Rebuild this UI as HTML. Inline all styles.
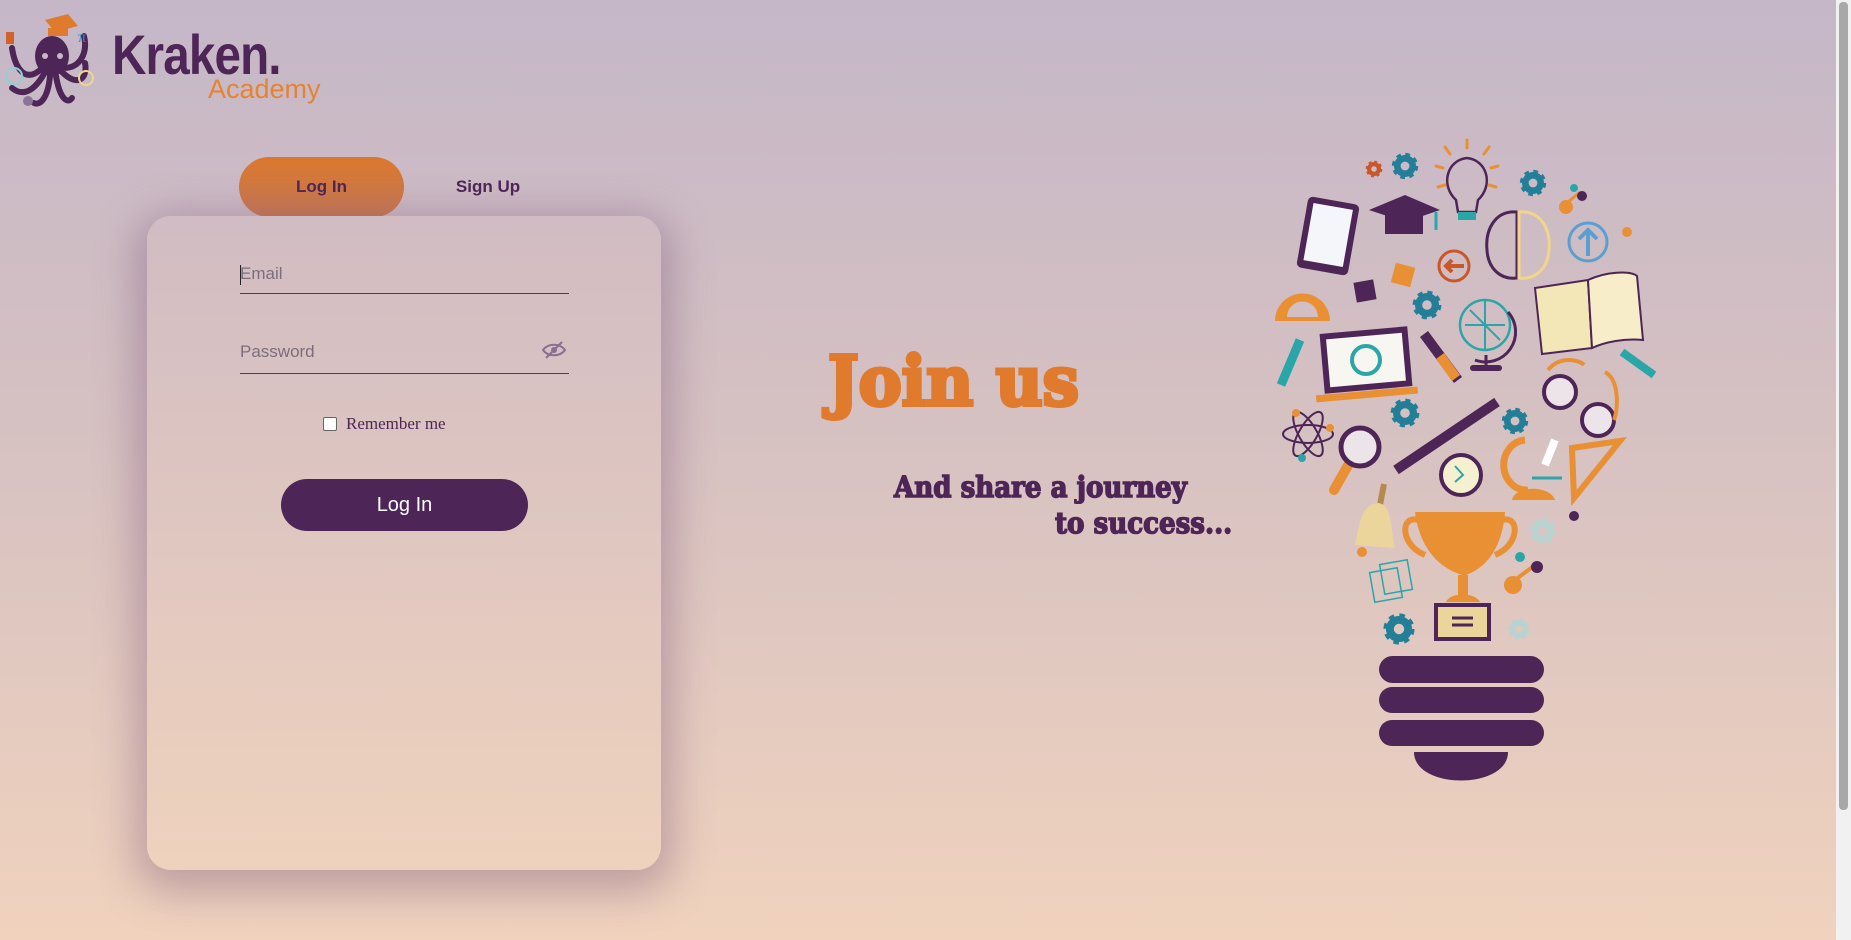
<!DOCTYPE html>
<html><head><meta charset="utf-8">
<style>
*{margin:0;padding:0;box-sizing:border-box}
html,body{width:1851px;height:940px;overflow:hidden}
body{background:linear-gradient(180deg,#c5b7c8 0%,#d6c1c2 45%,#f0d2bd 100%);font-family:"Liberation Sans",sans-serif;position:relative}
.abs{position:absolute}
.kr{left:112px;top:22px;font-size:56px;color:#4e2557;font-weight:bold;letter-spacing:-1px;transform:scaleX(.85);transform-origin:left}
.ac{left:208px;top:74px;font-size:27px;color:#e5832f}
.tab{left:239px;top:157px;width:165px;height:60px;border-radius:30px;background:linear-gradient(180deg,#db772d,#c87b55);color:#4e2557;font-weight:bold;font-size:17px;text-align:center;line-height:60px}
.su{left:440px;top:157px;width:96px;line-height:60px;text-align:center;font-weight:bold;font-size:17px;color:#4e2557}
.card{left:147px;top:216px;width:514px;height:654px;border-radius:24px;background:linear-gradient(180deg,#d1bcc3,#efd2bd);box-shadow:0 10px 40px 12px rgba(110,70,110,.35)}
.inp{left:240px;width:329px;border-bottom:1.5px solid #5a3361;color:#7b6e7c;font-size:17px}
.chk{left:323px;top:417px;width:14px;height:14px;border:1px solid #666;border-radius:2px;background:#fff}
.rem{left:346px;top:414px;font-family:"Liberation Serif",serif;font-size:17px;color:#4e2557}
.btn{left:281px;top:479px;width:247px;height:52px;border-radius:26px;background:#4e2557;color:#fff;font-size:20px;text-align:center;line-height:52px}
.join{left:828px;top:348px;font-family:"DejaVu Serif","Liberation Serif",serif;font-weight:900;font-size:68px;line-height:1;color:#e07a2c;letter-spacing:0px;transform:scaleX(.95);transform-origin:left;-webkit-text-stroke:4px #e07a2c}
.sh{font-family:"DejaVu Serif","Liberation Serif",serif;font-weight:bold;font-size:29px;color:#4e2557;transform:scaleX(.9);transform-origin:left;-webkit-text-stroke:1.5px #4e2557}
.sb{left:1836px;top:0;width:15px;height:940px;background:#f1f1f1}
.th{left:1839px;top:2px;width:9px;height:808px;background:#a8a8a8;border-radius:4px}
</style></head><body>
<svg class="abs" style="left:0;top:8px" width="100" height="105" viewBox="0 0 100 105">
<polygon points="45,12 68,6 78,18 55,24" fill="#e07a2c"/><rect x="48" y="20" width="20" height="8" fill="#e07a2c"/>
<ellipse cx="52" cy="48" rx="17" ry="20" fill="#4e2557"/>
<circle cx="45" cy="48" r="3" fill="#c9b8c6"/><circle cx="60" cy="48" r="3" fill="#c9b8c6"/>
<path d="M40,62 C25,75 15,60 12,40 M44,66 C30,90 18,85 12,80 M50,68 C48,90 40,98 34,95 M56,68 C60,92 68,96 72,90 M62,64 C78,80 88,70 85,55 M64,60 C80,60 88,45 84,28" stroke="#4e2557" stroke-width="6" fill="none" stroke-linecap="round"/>
<rect x="6" y="24" width="8" height="12" fill="#d0622a"/><text x="78" y="34" font-size="16" fill="#2a8fb0" font-family="Liberation Serif">π</text>
<circle cx="14" cy="68" r="8" fill="none" stroke="#8fd0d6" stroke-width="2"/><circle cx="86" cy="70" r="7" fill="none" stroke="#f0d58a" stroke-width="2"/>
<circle cx="28" cy="93" r="5" fill="#8b7497"/>
</svg>
<div class="abs kr">Kraken.</div>
<div class="abs ac">Academy</div>
<div class="abs tab">Log In</div>
<div class="abs su">Sign Up</div>
<div class="abs card"></div>
<div class="abs inp" style="top:264px;height:30px">Email</div>
<div class="abs" style="left:240px;top:265px;width:1px;height:20px;background:#222"></div>
<div class="abs inp" style="top:342px;height:32px">Password</div>
<svg class="abs" style="left:541px;top:340px" width="26" height="20" viewBox="0 0 26 20"><path d="M2,10 C7,3 19,3 24,10 C19,17 7,17 2,10Z" fill="none" stroke="#8b6e91" stroke-width="2"/><circle cx="13" cy="10" r="3" fill="#8b6e91"/><line x1="5" y1="18" x2="21" y2="2" stroke="#8b6e91" stroke-width="2"/></svg>
<div class="abs chk"></div>
<div class="abs rem">Remember me</div>
<div class="abs btn">Log In</div>
<div class="abs join">Join us</div>
<div class="abs sh" style="left:894px;top:470px">And share a journey</div>
<div class="abs sh" style="left:1055px;top:506px">to success...</div>
<svg class="abs" style="left:0;top:0" width="1851" height="940">
<defs>
<g id="gr"><circle r="7" fill="none" stroke="currentColor" stroke-width="6"/><circle r="10" fill="none" stroke="currentColor" stroke-width="4" stroke-dasharray="4 3.85"/></g>
</defs>
<g color="#c9572a"><use href="#gr" transform="translate(1374,169) scale(.7)"/></g>
<g color="#237e98">
<use href="#gr" transform="translate(1405,166) scale(1.1)"/>
<use href="#gr" transform="translate(1533,183) scale(1.1)"/>
<use href="#gr" transform="translate(1427,305) scale(1.2)"/>
<use href="#gr" transform="translate(1405,413) scale(1.2)"/>
<use href="#gr" transform="translate(1515,421) scale(1.1)"/>
<use href="#gr" transform="translate(1399,629) scale(1.3)"/>
</g>
<g color="#b9d3d0"><use href="#gr" transform="translate(1543,531) scale(1.1)"/><use href="#gr" transform="translate(1519,629) scale(.9)"/></g>
<path d="M1456,200 C1440,185 1447,160 1467,158 C1487,160 1494,185 1478,200 L1476,212 L1458,212Z" fill="none" stroke="#4e2557" stroke-width="2.5"/>
<rect x="1458" y="212" width="18" height="8" fill="#2aa6a9"/>
<g stroke="#e89033" stroke-width="3" stroke-linecap="round"><line x1="1467" y1="140" x2="1467" y2="148"/><line x1="1445" y1="147" x2="1450" y2="154"/><line x1="1489" y1="147" x2="1484" y2="154"/><line x1="1436" y1="166" x2="1443" y2="168"/><line x1="1498" y1="166" x2="1491" y2="168"/><line x1="1438" y1="187" x2="1445" y2="185"/><line x1="1496" y1="187" x2="1489" y2="185"/></g>
<line x1="1567" y1="203" x2="1580" y2="192" stroke="#e89033" stroke-width="3"/><circle cx="1566" cy="207" r="7" fill="#e89033"/><circle cx="1582" cy="196" r="5" fill="#4e2557"/><circle cx="1574" cy="188" r="4" fill="#2aa6a9"/>
<rect x="1302" y="200" width="52" height="72" rx="5" fill="#4e2557" transform="rotate(10 1328 236)"/>
<rect x="1308" y="206" width="40" height="58" fill="#f4f6fa" transform="rotate(10 1328 236)"/>
<polygon points="1369,210 1405,195 1440,210 1405,222" fill="#4e2557"/><rect x="1385" y="214" width="38" height="20" fill="#4e2557"/><line x1="1436" y1="212" x2="1436" y2="230" stroke="#2aa6a9" stroke-width="3"/>
<path d="M1517,212 C1495,210 1485,230 1487,250 C1488,268 1500,280 1517,278Z" fill="none" stroke="#4e2557" stroke-width="3"/>
<path d="M1519,212 C1541,210 1551,230 1549,250 C1548,268 1536,280 1519,278Z" fill="none" stroke="#f0d58a" stroke-width="3"/>
<circle cx="1588" cy="242" r="19" fill="none" stroke="#5a9fd0" stroke-width="3"/><path d="M1588,256 L1588,230 M1579,239 L1588,230 L1597,239" stroke="#5a9fd0" stroke-width="4" fill="none"/>
<circle cx="1627" cy="232" r="5" fill="#e89033"/>
<circle cx="1454" cy="266" r="15" fill="none" stroke="#c9572a" stroke-width="3"/><path d="M1464,266 L1446,266 M1452,260 L1446,266 L1452,272" stroke="#c9572a" stroke-width="4" fill="none"/>
<rect x="1393" y="265" width="20" height="20" fill="#e89033" transform="rotate(15 1403 275)"/><rect x="1355" y="281" width="20" height="20" fill="#4e2557" transform="rotate(-10 1365 291)"/>
<path d="M1275,321 A27,27 0 0 1 1330,321Z" fill="#e89033"/><path d="M1287,317 A15,15 0 0 1 1318,317Z" fill="#d3bec3"/>
<circle cx="1485" cy="325" r="25" fill="none" stroke="#2aa6a9" stroke-width="2.5"/><path d="M1465,325 L1505,325 M1485,300 L1485,350 M1470,310 L1500,340" stroke="#2aa6a9" stroke-width="2"/>
<path d="M1508,312 A30,30 0 0 1 1475,360" fill="none" stroke="#4e2557" stroke-width="3"/><rect x="1470" y="365" width="32" height="6" rx="3" fill="#4e2557"/><line x1="1486" y1="355" x2="1486" y2="366" stroke="#4e2557" stroke-width="3"/>
<path d="M1535,288 L1588,280 L1592,348 L1542,354Z" fill="#f3e7b8" stroke="#4e2557" stroke-width="2"/>
<path d="M1588,280 C1605,272 1630,270 1637,276 L1643,340 C1625,338 1605,342 1592,348Z" fill="#f7eec9" stroke="#4e2557" stroke-width="2"/>
<line x1="1300" y1="340" x2="1281" y2="385" stroke="#2aa6a9" stroke-width="9"/><line x1="1622" y1="352" x2="1654" y2="375" stroke="#2aa6a9" stroke-width="8"/>
<rect x="1322" y="330" width="88" height="60" fill="#4e2557" transform="rotate(-5 1366 360)"/><rect x="1328" y="336" width="76" height="48" fill="#f8f6f0" transform="rotate(-5 1366 360)"/>
<circle cx="1366" cy="360" r="14" fill="none" stroke="#2aa6a9" stroke-width="4"/>
<rect x="1316" y="391" width="102" height="7" fill="#e89033" transform="rotate(-5 1366 395)"/>
<line x1="1424" y1="334" x2="1458" y2="380" stroke="#4e2557" stroke-width="10"/><line x1="1440" y1="356" x2="1456" y2="378" stroke="#e89033" stroke-width="10"/>
<circle cx="1560" cy="392" r="16" fill="#ede4ea" stroke="#4e2557" stroke-width="4"/><circle cx="1598" cy="420" r="16" fill="#ede4ea" stroke="#4e2557" stroke-width="4"/>
<path d="M1548,370 C1560,355 1580,360 1584,365 M1605,372 C1620,380 1618,410 1614,420" stroke="#e89033" stroke-width="4" fill="none"/>
<g fill="none" stroke="#4e2557" stroke-width="2"><ellipse cx="1308" cy="434" rx="25" ry="9"/><ellipse cx="1308" cy="434" rx="25" ry="9" transform="rotate(60 1308 434)"/><ellipse cx="1308" cy="434" rx="25" ry="9" transform="rotate(-60 1308 434)"/></g>
<circle cx="1296" cy="413" r="4" fill="#e89033"/><circle cx="1330" cy="428" r="4" fill="#e89033"/><circle cx="1302" cy="458" r="4" fill="#2aa6a9"/>
<line x1="1350" y1="462" x2="1334" y2="490" stroke="#e89033" stroke-width="10" stroke-linecap="round"/><circle cx="1360" cy="447" r="19" fill="#ede4ea" stroke="#4e2557" stroke-width="5"/>
<line x1="1396" y1="470" x2="1497" y2="402" stroke="#4e2557" stroke-width="10"/>
<circle cx="1461" cy="475" r="20" fill="#f5f0d0" stroke="#4e2557" stroke-width="4"/><path d="M1455,466 L1463,475 L1455,482" stroke="#2aa6a9" stroke-width="2" fill="none"/>
<path d="M1525,440 A20,22 0 0 0 1528,490" fill="none" stroke="#e89033" stroke-width="7"/><path d="M1512,500 C1515,485 1550,485 1555,500Z" fill="#e89033"/>
<line x1="1555" y1="440" x2="1545" y2="465" stroke="#fff" stroke-width="8"/><line x1="1532" y1="478" x2="1562" y2="478" stroke="#2aa6a9" stroke-width="3"/>
<polygon points="1572,448 1620,441 1574,498" fill="none" stroke="#e89033" stroke-width="6"/>
<line x1="1384" y1="484" x2="1380" y2="505" stroke="#b38b4d" stroke-width="6"/><path d="M1355,545 C1360,520 1362,505 1378,503 C1392,505 1390,525 1395,548Z" fill="#ecd59a"/><circle cx="1362" cy="552" r="5" fill="#e89033"/>
<path d="M1415,512 L1505,512 C1502,550 1485,568 1466,575 L1462,575 C1440,568 1420,550 1415,512Z" fill="#e89033"/>
<path d="M1418,520 C1400,515 1400,545 1425,555 M1502,520 C1520,515 1520,545 1495,555" stroke="#e89033" stroke-width="6" fill="none"/>
<rect x="1458" y="575" width="10" height="20" fill="#e89033"/><path d="M1446,602 C1450,592 1475,592 1480,602Z" fill="#e89033"/>
<rect x="1434" y="603" width="57" height="38" fill="#4e2557"/><rect x="1438" y="607" width="49" height="30" fill="#ecd59a"/><line x1="1452" y1="618" x2="1473" y2="618" stroke="#4e2557" stroke-width="3"/><line x1="1452" y1="625" x2="1473" y2="625" stroke="#4e2557" stroke-width="3"/>
<circle cx="1574" cy="516" r="5" fill="#4e2557"/>
<line x1="1515" y1="580" x2="1535" y2="565" stroke="#e89033" stroke-width="4"/><circle cx="1513" cy="585" r="9" fill="#e89033"/><circle cx="1537" cy="567" r="6" fill="#4e2557"/><circle cx="1520" cy="557" r="5" fill="#2aa6a9"/>
<g fill="none" stroke="#2aa6a9" stroke-width="1.5"><rect x="1372" y="570" width="28" height="30" transform="rotate(-10 1386 585)"/><rect x="1382" y="562" width="28" height="30" transform="rotate(-10 1396 577)"/></g>
<g fill="#4e2557"><rect x="1379" y="656" width="165" height="27" rx="13.5"/><rect x="1379" y="687" width="165" height="26" rx="13"/><rect x="1379" y="720" width="165" height="26" rx="13"/><path d="M1414,752 L1508,752 C1508,790 1414,790 1414,752Z"/></g>
</svg>
<div class="abs sb"></div><div class="abs th"></div>
</body></html>
